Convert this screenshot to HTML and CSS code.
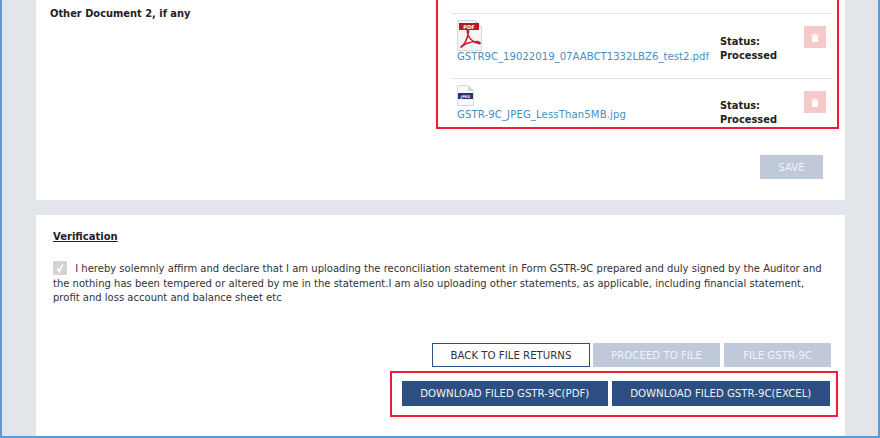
FILE: index.html
```html
<!DOCTYPE html>
<html lang="en">
<head>
<meta charset="utf-8">
<title>GSTR-9C</title>
<link rel="stylesheet" href="styles.css">
</head>
<body>
<div class="frame">
  <section class="card card-top">
    <div class="doc-row">
      <div class="doc-label">Other Document 2, if any</div>
      <div class="file-box">
        <div class="file-row row-first">
          <div class="file-info">
            <svg class="ico-pdf" viewBox="0 0 25 31" width="25" height="31">
              <path d="M.5.5H18L24.5 7V30.5H.5Z" fill="#f5f5f5" stroke="#d8d8d8"/>
              <path d="M18 .5V7h6.5Z" fill="#d8d8d8"/>
              <rect x="2" y="3" width="20" height="7" fill="#b3182b"/>
              <text x="12" y="8.6" class="ico-text" fill="#fff">PDF</text>
              <path d="M3.5 27.5C7 25 10.5 19 11.5 11.5C12 9 10 9 10.3 12C11 17 15 22 22 23.5C24 24 23 21.5 20 21.5C15 21.5 8 23.5 3.5 27.5Z" fill="none" stroke="#c4202f" stroke-width="1.7"/>
            </svg>
            <a class="file-link" href="#">GSTR9C_19022019_07AABCT1332LBZ6_test2.pdf</a>
          </div>
          <div class="status">Status:<br>Processed</div>
          <button class="trash" type="button" aria-label="Delete">
            <svg viewBox="0 0 8 9" width="8" height="9"><path d="M0 1.5H3V.5H5V1.5H8V2.5H0ZM1 3H7V9H1Z" fill="#fff"/></svg>
          </button>
        </div>
        <div class="file-row row-second">
          <div class="file-info">
            <svg class="ico-jpg" viewBox="0 0 17 21" width="17" height="21">
              <path d="M.5.5H11L16.5 6V20.5H.5Z" fill="#fafafa" stroke="#d8d8d8"/>
              <path d="M11 .5V6h5.5Z" fill="#d4d4d4"/>
              <rect x="1" y="8" width="15" height="6" fill="#24366b"/>
              <text x="8.5" y="12.8" class="ico-text-small" fill="#fff">JPEG</text>
            </svg>
            <a class="file-link" href="#">GSTR-9C_JPEG_LessThan5MB.jpg</a>
          </div>
          <div class="status">Status:<br>Processed</div>
          <button class="trash" type="button" aria-label="Delete">
            <svg viewBox="0 0 8 9" width="8" height="9"><path d="M0 1.5H3V.5H5V1.5H8V2.5H0ZM1 3H7V9H1Z" fill="#fff"/></svg>
          </button>
        </div>
      </div>
    </div>
    <div class="save-row"><button class="btn btn-off btn-save" type="button">SAVE</button></div>
  </section>

  <section class="card card-verify">
    <h2 class="verify-title">Verification</h2>
    <div class="declare">
      <span class="check"><svg viewBox="0 0 14 14" width="14" height="14"><path d="M4.5 7.5L6.3 10.5L9.5 3.5" fill="none" stroke="#fff" stroke-width="1.6"/></svg></span>
      I hereby solemnly affirm and declare that I am uploading the reconciliation statement in Form GSTR-9C prepared and duly signed by the Auditor and the nothing has been tempered or altered by me in the statement.I am also uploading other statements, as applicable, including financial statement, profit and loss account and balance sheet etc
    </div>
    <div class="actions">
      <button class="btn btn-outline" type="button">BACK TO FILE RETURNS</button>
      <button class="btn btn-off btn-proceed" type="button">PROCEED TO FILE</button>
      <button class="btn btn-off btn-file" type="button">FILE GSTR-9C</button>
    </div>
    <div class="download-box">
      <button class="btn btn-dark btn-pdf" type="button">DOWNLOAD FILED GSTR-9C(PDF)</button>
      <button class="btn btn-dark btn-excel" type="button">DOWNLOAD FILED GSTR-9C(EXCEL)</button>
    </div>
  </section>
</div>
</body>
</html>
```
FILE: styles.css
```css
* { box-sizing: border-box; }
html, body { margin: 0; padding: 0; }
body {
  width: 880px;
  height: 438px;
  overflow: hidden;
  font-family: "DejaVu Sans", Verdana, sans-serif;
  font-size: 10px;
  color: #333;
}
.frame {
  width: 880px;
  height: 438px;
  background: #e2e6ea;
  border-left: 2px solid #5b9bd5;
  border-right: 2px solid #5b9bd5;
  border-bottom: 2px solid #5b9bd5;
  padding: 0 33px 0 34px;
  display: flex;
  flex-direction: column;
  gap: 15px;
}
.card { background: #fff; width: 809px; }
.card-top { height: 200px; padding-right: 6px; }
.doc-row { display: flex; height: 129px; }
.doc-label {
  width: 400px;
  padding: 7px 0 0 14px;
  font-weight: 700;
  color: #222;
  line-height: 13px;
  font-size: 9.9px;
}
.file-box {
  width: 403px;
  height: 129px;
  border: 2px solid #ee1c35;
  border-top: 0;
  padding: 13px 5px 0 13px;
}
.file-row {
  display: flex;
  height: 65px;
  border-top: 1px solid #e4e4e4;
  padding-left: 6px;
}
.row-second { height: 50px; overflow: hidden; }
.file-info { width: 263px; display: flex; flex-direction: column; align-items: flex-start; }
.ico-pdf { margin-top: 6px; display: block; }
.ico-jpg { margin-top: 6px; display: block; }
.ico-text { font: 700 5.2px "DejaVu Sans", sans-serif; text-anchor: middle; }
.ico-text-small { font: 700 3.6px "DejaVu Sans", sans-serif; text-anchor: middle; }
.file-link {
  color: #4a8ec2;
  text-decoration: none;
  font-size: 10.15px;
  line-height: 13px;
  white-space: nowrap;
}
.row-first .file-link { margin-top: -1px; }
.row-second .file-link { margin-top: 2px; letter-spacing: .1px; }
.status {
  width: 84px;
  font-weight: 700;
  color: #222;
  font-size: 9.9px;
  line-height: 14.3px;
  padding-top: 21px;
}
.row-second .status { padding-top: 20px; }
.trash {
  width: 22px;
  height: 22px;
  margin-top: 12px;
  border: 0;
  padding: 0;
  background: #f5c9cc;
  display: flex;
  align-items: center;
  justify-content: center;
}
.save-row { display: flex; justify-content: flex-end; padding: 26px 16px 0 0; }
.btn {
  font-family: "DejaVu Sans", Verdana, sans-serif;
  font-size: 10.2px;
  height: 24px;
  padding: 0;
  border: 0;
  white-space: nowrap;
}
.btn-off { background: #bfc9da; color: #f0f3f7; }
.btn-save { width: 63px; }
.btn-outline { width: 158px; background: #fff; border: 1px solid #2c4e80; color: #333; }
.btn-proceed { width: 127px; }
.btn-file { width: 107px; margin-left: 1px; }
.btn-dark { background: #2c4e80; color: #eef2f7; height: 25px; }
.btn-pdf { width: 206px; }
.btn-excel { width: 219px; }
.card-verify { flex: 1; padding: 14px 14px 0 16px; }
.verify-title {
  margin: 0;
  padding-left: 1px;
  font-size: 10px;
  font-weight: 700;
  color: #222;
  text-decoration: underline;
  line-height: 15px;
}
.declare {
  margin-top: 17px;
  padding-left: 1px;
  font-size: 10.03px;
  line-height: 14.5px;
  color: #333;
  width: 775px;
}
.check {
  display: inline-block;
  width: 14px;
  height: 14px;
  background: #d4d4d4;
  vertical-align: -3px;
  margin-right: 5px;
  line-height: 0;
}
.actions {
  margin-top: 37.5px;
  display: flex;
  justify-content: flex-end;
  gap: 3px;
}
.download-box {
  margin: 4px -7px 0 338px;
  width: 448px;
  height: 46px;
  border: 2px solid #ee1c35;
  padding: 8px 6px 0 10px;
  display: flex;
  gap: 4px;
}
```
